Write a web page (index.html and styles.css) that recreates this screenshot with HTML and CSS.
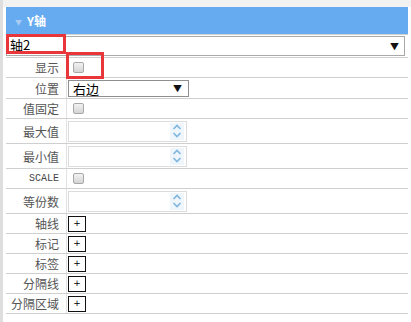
FILE: index.html
```html
<!DOCTYPE html>
<html lang="zh-CN">
<head>
    <meta charset="UTF-8">
    <title>Y轴</title>
    <link rel="stylesheet" href="styles.css">
</head>
<body>
<div class="page">
    <div class="panel">
        <div class="panel-head"><span class="caret">&#9660;</span>Y轴</div>

        <div class="axis-select">
            <span class="axis-name">轴2</span>
            <span class="arrow">&#9660;</span>
        </div>

        <div class="row">
            <div class="label">显示</div>
            <div class="value"><span class="check"></span></div>
        </div>
        <div class="row row-select">
            <div class="label">位置</div>
            <div class="value">
                <div class="select"><span>右边</span><span class="arrow">&#9660;</span></div>
            </div>
        </div>
        <div class="row">
            <div class="label">值固定</div>
            <div class="value"><span class="check"></span></div>
        </div>
        <div class="row row-tall">
            <div class="label">最大值</div>
            <div class="value"><div class="spinner"><span class="spin"><svg width="10" height="16" viewBox="0 0 10 16"><path d="M1.5 6 L5 2.5 L8.5 6 M1.5 10 L5 13.5 L8.5 10" fill="none" stroke="#7fb6df" stroke-width="1.6"/></svg></span></div></div>
        </div>
        <div class="row row-tall">
            <div class="label">最小值</div>
            <div class="value"><div class="spinner"><span class="spin"><svg width="10" height="16" viewBox="0 0 10 16"><path d="M1.5 6 L5 2.5 L8.5 6 M1.5 10 L5 13.5 L8.5 10" fill="none" stroke="#7fb6df" stroke-width="1.6"/></svg></span></div></div>
        </div>
        <div class="row">
            <div class="label mono">SCALE</div>
            <div class="value"><span class="check"></span></div>
        </div>
        <div class="row row-tall">
            <div class="label">等份数</div>
            <div class="value"><div class="spinner"><span class="spin"><svg width="10" height="16" viewBox="0 0 10 16"><path d="M1.5 6 L5 2.5 L8.5 6 M1.5 10 L5 13.5 L8.5 10" fill="none" stroke="#7fb6df" stroke-width="1.6"/></svg></span></div></div>
        </div>
        <div class="row">
            <div class="label">轴线</div>
            <div class="value"><span class="plus">+</span></div>
        </div>
        <div class="row">
            <div class="label">标记</div>
            <div class="value"><span class="plus">+</span></div>
        </div>
        <div class="row">
            <div class="label">标签</div>
            <div class="value"><span class="plus">+</span></div>
        </div>
        <div class="row">
            <div class="label">分隔线</div>
            <div class="value"><span class="plus">+</span></div>
        </div>
        <div class="row">
            <div class="label">分隔区域</div>
            <div class="value"><span class="plus">+</span></div>
        </div>
    </div>

    <!-- annotation boxes -->
    <div class="mark mark-name"></div>
    <div class="mark mark-show"></div>
</div>
</body>
</html>
```

FILE: styles.css
```css
body {
    margin: 0;
    background: #fff;
    font-family: "Noto Sans CJK SC", "Noto Sans", sans-serif;
    font-size: 12px;
    color: #333;
}
.page {
    position: relative;
    height: 322px;
    border-left: 3px solid #dedede;
    background: linear-gradient(#f2f2f2, #f2f2f2) no-repeat 0 0 / 100% 7px;
    padding: 7px 3px 0 3px;
    box-sizing: border-box;
}
.panel-head {
    height: 27px;
    background: #66aaf0;
    color: #fff;
    font-weight: bold;
    font-size: 12px;
    line-height: 27px;
    padding-left: 9px;
    border-bottom: 1px solid #d0d0d0;
}
.caret {
    font-size: 7px;
    color: #a9ccf2;
    margin-right: 5px;
    vertical-align: 1px;
}
.axis-select {
    display: flex;
    justify-content: space-between;
    align-items: center;
    height: 18px;
    margin: 1px 3px 1px 0;
    padding: 0 5px 0 3px;
    border: 1px solid #a9a9a9;
    font-size: 13px;
    color: #000;
}
.axis-name {
    line-height: 14px;
    margin-top: -3px;
}
.arrow {
    font-size: 9px;
    color: #111;
}
.row {
    display: grid;
    grid-template-columns: 61px 1fr;
    height: 20px;
    border-top: 1px solid #cfcfcf;
    box-sizing: border-box;
}
.row:last-child {
    border-bottom: 1px solid #cfcfcf;
    height: 21px;
}
.row-select {
    height: 21px;
}
.row-tall {
    height: 25px;
}
.label {
    padding-right: 7px;
    border-right: 1px solid #e2e2e2;
    display: flex;
    align-items: center;
    justify-content: flex-end;
    color: #555;
    font-size: 12px;
}
.mono {
    font-family: "Liberation Mono", "DejaVu Sans Mono", monospace;
    font-size: 10px;
    color: #444;
}
.value {
    display: flex;
    align-items: center;
    padding-left: 1px;
}
.check {
    display: inline-block;
    width: 9px;
    height: 9px;
    margin-left: 5px;
    border: 1px solid #a8a8a8;
    border-radius: 2px;
    background: linear-gradient(#f2f2f2, #d4d4d4);
}
.select {
    display: flex;
    justify-content: space-between;
    align-items: center;
    width: 109px;
    height: 15px;
    padding: 0 6px 0 4px;
    border: 1px solid #8f8f8f;
    font-size: 13px;
    color: #000;
}
.spinner {
    width: 117px;
    height: 19px;
    border: 1px solid #dcdcdc;
    display: flex;
    justify-content: flex-end;
    align-items: center;
}
.spin {
    display: flex;
    align-items: center;
    justify-content: center;
    width: 14px;
    height: 17px;
    margin-right: 2px;
    background: #eef5fb;
}
.plus {
    display: inline-block;
    width: 16px;
    height: 14px;
    border: 1px solid #111;
    text-align: center;
    line-height: 13px;
    font-size: 9px;
    color: #000;
    font-family: "DejaVu Sans", sans-serif;
}
.mark {
    position: absolute;
    border: 3px solid #e8363b;
}
.mark-name {
    left: 3px;
    top: 34px;
    width: 54px;
    height: 14px;
}
.mark-show {
    left: 63px;
    top: 52px;
    width: 32px;
    height: 21px;
}
```
